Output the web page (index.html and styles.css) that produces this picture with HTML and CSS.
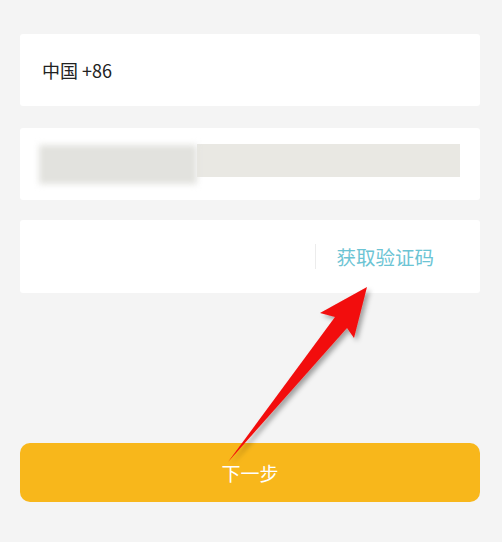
FILE: index.html
```html
<!DOCTYPE html>
<html lang="zh-CN">
<head>
  <meta charset="UTF-8">
  <title>登录</title>
  <link rel="stylesheet" href="styles.css">
</head>
<body>

  <div class="page">
    <div class="field">
      <span class="country">中国 +86</span>
    </div>

    <div class="field field-phone">
      <div class="masked">
        <div class="masked-blur"></div>
        <div class="masked-plain"></div>
      </div>
    </div>

    <div class="field field-code">
      <span class="divider"></span>
      <span class="get-code">获取验证码</span>
    </div>

    <button class="next">下一步</button>

    <svg class="arrow" width="502" height="542" viewBox="0 0 502 542">
      <defs>
        <filter id="shadow" x="-20%" y="-20%" width="140%" height="140%">
          <feDropShadow dx="3" dy="3" stdDeviation="2.5" flood-color="#000" flood-opacity="0.35"/>
        </filter>
      </defs>
      <path d="M367 287 L320 313 L335 317 L228 462 L347 328 L354 338 Z" fill="#f20c0c" filter="url(#shadow)"/>
    </svg>
  </div>

</body>
</html>
```

FILE: styles.css
```css
body {
  margin: 0;
  background-color: #f4f4f4;
  font-family: "Noto Sans CJK SC", "Noto Sans", sans-serif;
}

.page {
  position: relative;
  width: 502px;
  height: 542px;
  padding: 34px 22px 0 20px;
  box-sizing: border-box;
  display: flex;
  flex-direction: column;
}

.field {
  background-color: #fff;
  height: 72px;
  border-radius: 3px;
  display: flex;
  align-items: center;
  box-sizing: border-box;
}

.country {
  margin-left: 22px;
  font-size: 18px;
  color: #222;
}

.field-phone {
  margin-top: 22px;
  padding: 0 20px 0 19px;
}

.masked {
  position: relative;
  flex: 1;
  height: 40px;
  display: flex;
  align-items: flex-start;
}

.masked-blur {
  width: 158px;
  height: 39px;
  margin-top: 1px;
  background-color: #e2e2de;
  filter: blur(3px);
}

.masked-plain {
  flex: 1;
  height: 33px;
  background-color: #e9e8e3;
}

.field-code {
  margin-top: 20px;
  height: 73px;
  justify-content: flex-end;
  padding-right: 46px;
}

.divider {
  width: 1px;
  height: 25px;
  background-color: #ececec;
  margin-right: 20px;
}

.get-code {
  font-size: 19.5px;
  color: #6cc4d4;
}

.next {
  margin-top: 150px;
  height: 59px;
  border: none;
  border-radius: 10px;
  background-color: #f8b71b;
  color: #fff;
  font-family: inherit;
  font-size: 19px;
  cursor: pointer;
}

.arrow {
  position: absolute;
  left: 0;
  top: 0;
  pointer-events: none;
}
```
